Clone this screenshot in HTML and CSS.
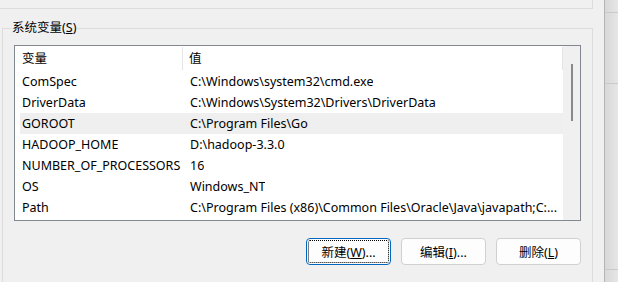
FILE: index.html
```html
<!DOCTYPE html>
<html lang="zh-CN">
<head>
    <meta charset="UTF-8">
    <title>环境变量</title>
    <link rel="stylesheet" href="styles.css">
</head>
<body>
    <div class="screen">
        <div class="dialog">
            <div class="upper-group"></div>

            <fieldset class="group">
                <legend>系统变量(<u>S</u>)</legend>

                <div class="listview">
                    <div class="list-main">
                        <div class="list-header">
                            <div class="hcol hcol-name">变量</div>
                            <div class="hcol hcol-value">值</div>
                        </div>
                        <div class="rows">
                            <div class="row"><span class="c-name">ComSpec</span><span class="c-value">C:\Windows\system32\cmd.exe</span></div>
                            <div class="row"><span class="c-name">DriverData</span><span class="c-value">C:\Windows\System32\Drivers\DriverData</span></div>
                            <div class="row hover"><span class="c-name">GOROOT</span><span class="c-value">C:\Program Files\Go</span></div>
                            <div class="row"><span class="c-name">HADOOP_HOME</span><span class="c-value">D:\hadoop-3.3.0</span></div>
                            <div class="row"><span class="c-name">NUMBER_OF_PROCESSORS</span><span class="c-value">16</span></div>
                            <div class="row"><span class="c-name">OS</span><span class="c-value">Windows_NT</span></div>
                            <div class="row"><span class="c-name">Path</span><span class="c-value">C:\Program Files (x86)\Common Files\Oracle\Java\javapath;C:...</span></div>
                        </div>
                    </div>
                    <div class="vscroll"><div class="thumb"></div></div>
                </div>

                <div class="buttons">
                    <button class="btn btn-default">新建(<u>W</u>)...</button>
                    <button class="btn">编辑(<u>I</u>)...</button>
                    <button class="btn">删除(<u>L</u>)</button>
                </div>
            </fieldset>
        </div>

        <div class="edge">
            <div class="edge-part p1"></div>
            <div class="edge-part p2"></div>
            <div class="edge-part p3"></div>
            <div class="edge-part p4"></div>
        </div>
    </div>
</body>
</html>
```

FILE: styles.css
```css
html, body {
    margin: 0;
    padding: 0;
}
body {
    background: #f0f0f0;
    font-family: "Noto Sans", "Noto Sans CJK SC", sans-serif;
    font-size: 12.5px;
    color: #000;
    overflow: hidden;
}
.screen {
    display: flex;
    width: 618px;
    height: 282px;
    overflow: hidden;
}
.dialog {
    width: 604px;
    flex: none;
    border-right: 1px solid #b4b4b4;
}

/* group box above (only its bottom edge is visible) */
.upper-group {
    width: 592px;
    height: 8px;
    border-right: 1px solid #dcdcdc;
    border-bottom: 1px solid #dcdcdc;
}

.group {
    margin: 11px 0 0 2px;
    padding: 0 11px 0 11px;
    width: 567px;
    height: 300px;
    border: 1px solid #dcdcdc;
}
.group legend {
    padding: 0 1px;
    margin-left: -3px;
    line-height: 16px;
}

.listview {
    display: flex;
    margin-top: 9px;
    height: 174px;
    border: 1px solid #828790;
    background: #fff;
}
.list-main {
    flex: 1;
    overflow: hidden;
}
.list-header {
    display: flex;
    height: 25px;
    line-height: 23px;
}
.hcol {
    padding-left: 7px;
    border-right: 1px solid #e5e5e5;
    margin: 1px 0;
}
.hcol-name {
    width: 160px;
}
.hcol-value {
    flex: 1;
    padding-left: 6px;
}

.rows {
    margin-left: 5px;
}
.row {
    display: flex;
    height: 21px;
    line-height: 21px;
    white-space: nowrap;
}
.row.hover {
    background: #efefef;
}
.c-name {
    width: 168px;
    flex: none;
    padding-left: 2px;
}
.c-value {
    overflow: hidden;
}

.vscroll {
    width: 17px;
    flex: none;
    background: #f0f0f0;
    display: flex;
    justify-content: center;
}
.thumb {
    width: 2px;
    height: 57px;
    margin-top: 18px;
    background: #898989;
}

.buttons {
    display: flex;
    justify-content: flex-end;
    gap: 10px;
    margin-top: 17px;
}
.btn {
    width: 85px;
    height: 27px;
    font-family: "Noto Sans", "Noto Sans CJK SC", sans-serif;
    font-size: 12.5px;
    color: #000;
    background: #fdfdfd;
    border: 1px solid #d0d0d0;
    border-radius: 4px;
    padding: 0;
}
.btn-default {
    border-color: #0067c0;
    outline: 1px dotted #000;
    outline-offset: -3px;
}

/* window behind the dialog */
.edge {
    flex: 1;
    display: flex;
    flex-direction: column;
    background: linear-gradient(to right, #d8d8d8, #e6e6e6);
}
.edge-part {
    border-top: 1px solid #c9c9c9;
}
.p1 { height: 12px; border-top: none; }
.p2 { height: 70px; }
.p3 { height: 185px; }
.p4 { flex: 1; }
```
